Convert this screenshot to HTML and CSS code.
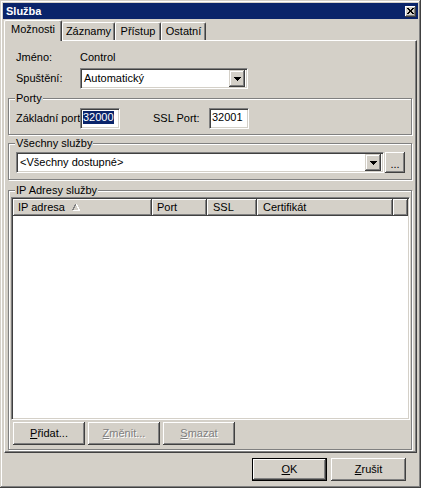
FILE: index.html
```
<!DOCTYPE html>
<html lang="cs">
<head>
<meta charset="utf-8">
<title>Služba</title>
<link rel="stylesheet" href="styles.css">
</head>
<body>
<div class="window">
  <div class="titlebar">
    <span class="title">Služba</span>
    <span class="close-btn">
      <svg width="7" height="6" viewBox="0 0 7 6" shape-rendering="crispEdges"><path d="M0 0h2v1h-2zM5 0h2v1h-2zM1 1h2v1h-2zM4 1h2v1h-2zM2 2h3v2h-3zM1 4h2v1h-2zM4 4h2v1h-2zM0 5h2v1h-2zM5 5h2v1h-2z" fill="#000"/></svg>
    </span>
  </div>
  <div class="client">
    <div class="tabs">
      <div class="tab active">Možnosti</div>
      <div class="tab t-zaznamy">Záznamy</div>
      <div class="tab t-pristup">Přístup</div>
      <div class="tab t-ostatni">Ostatní</div>
    </div>
    <div class="panel">
      <div class="row r-name">
        <span class="lbl">Jméno:</span>
        <span>Control</span>
      </div>
      <div class="row r-start">
        <span class="lbl">Spuštění:</span>
        <div class="combo c-start">
          <span class="combo-text">Automatický</span>
          <span class="drop"><svg width="7" height="4" viewBox="0 0 7 4" shape-rendering="crispEdges"><path d="M0 0h7v1h-7zM1 1h5v1h-5zM2 2h3v1h-3zM3 3h1v1h-1z" fill="#000"/></svg></span>
        </div>
      </div>

      <div class="group g-ports">
        <span class="legend">Porty</span>
        <div class="ports-row">
          <span class="lbl">Základní port</span>
          <div class="edit"><span class="sel">32000</span></div>
          <span class="lbl ssl">SSL Port:</span>
          <div class="edit">32001</div>
        </div>
      </div>

      <div class="group g-all">
        <span class="legend">Všechny služby</span>
        <div class="all-row">
          <div class="combo c-all">
            <span class="combo-text">&lt;Všechny dostupné&gt;</span>
            <span class="drop"><svg width="7" height="4" viewBox="0 0 7 4" shape-rendering="crispEdges"><path d="M0 0h7v1h-7zM1 1h5v1h-5zM2 2h3v1h-3zM3 3h1v1h-1z" fill="#000"/></svg></span>
          </div>
          <div class="btn btn-dots">...</div>
        </div>
      </div>

      <div class="group g-ip">
        <span class="legend">IP Adresy služby</span>
        <div class="listview">
          <div class="lv-header">
            <div class="hcell h-ip">IP adresa<svg class="sort" width="8" height="7" viewBox="0 0 8 7" shape-rendering="crispEdges"><path d="M3.5 0.5 L0.5 6.5" stroke="#808080" fill="none"/><path d="M4.5 0.5 L7.5 6.5 M0.5 6.5 H7.5" stroke="#fff" fill="none"/></svg></div>
            <div class="hcell h-port">Port</div>
            <div class="hcell h-ssl">SSL</div>
            <div class="hcell h-cert">Certifikát</div>
            <div class="hcell h-fill"></div>
          </div>
        </div>
        <div class="ip-buttons">
          <div class="btn btn-act"><u>P</u>řidat...</div>
          <div class="btn btn-act disabled"><u>Z</u>měnit...</div>
          <div class="btn btn-act disabled"><u>S</u>mazat</div>
        </div>
      </div>
    </div>
    <div class="footer">
      <div class="btn btn-main default"><u>O</u>K</div>
      <div class="btn btn-main"><u>Z</u>rušit</div>
    </div>
  </div>
</div>
</body>
</html>
```

FILE: styles.css
```
* { box-sizing: border-box; }
html, body { margin: 0; padding: 0; }
body {
  background: #D4D0C8;
  font: 11px/13px "Liberation Sans", Arial, sans-serif;
  color: #000;
  width: 421px;
  height: 488px;
  overflow: hidden;
}
.window {
  width: 421px;
  height: 488px;
  padding: 3px;
  background: #D4D0C8;
  box-shadow: inset -1px -1px 0 #404040, inset 1px 1px 0 #D4D0C8, inset -2px -2px 0 #808080, inset 2px 2px 0 #fff;
  display: flex;
  flex-direction: column;
}
.titlebar {
  height: 16px;
  background: #0A246A;
  display: flex;
  align-items: center;
  justify-content: space-between;
  padding-left: 3px;
  padding-right: 2px;
  flex: none;
}
.title { color: #fff; font-weight: bold; }
.close-btn {
  width: 11px;
  height: 11px;
  background: #D4D0C8;
  box-shadow: inset -1px -1px 0 #404040, inset 1px 1px 0 #fff, inset -2px -2px 0 #808080;
  display: flex;
  align-items: center;
  justify-content: center;
  padding-bottom: 1px;
}
.close-btn svg { display: block; }
.client {
  flex: 1;
  display: flex;
  flex-direction: column;
  padding: 0 1px;
}
.tabs {
  height: 21px;
  display: flex;
  align-items: flex-end;
  position: relative;
  z-index: 1;
  flex: none;
}
.tab {
  height: 18px;
  border-left: 1px solid #fff;
  border-top: 1px solid #fff;
  border-right: 1px solid #404040;
  box-shadow: inset -1px 0 0 #808080;
  border-radius: 2px 2px 0 0;
  padding-top: 2px;
  text-align: center;
  background: #D4D0C8;
}
.tab.active { width: 58px; height: 21px; margin-bottom: -1px; }
.t-zaznamy { width: 53px; }
.t-pristup { width: 46px; }
.t-ostatni { width: 45px; }
.panel {
  height: 413px;
  flex: none;
  border-left: 1px solid #fff;
  border-top: 1px solid #fff;
  border-right: 1px solid #404040;
  border-bottom: 1px solid #404040;
  box-shadow: inset -1px -1px 0 #808080;
  padding: 0 3px;
  display: flex;
  flex-direction: column;
}
.row { display: flex; align-items: center; margin-left: 8px; }
.lbl { width: 64px; flex: none; white-space: nowrap; }
.r-name { margin-top: 10px; height: 13px; }
.r-start { margin-top: 4px; height: 21px; }

.combo, .edit {
  height: 21px;
  background: #fff;
  border: 1px solid;
  border-color: #808080 #fff #fff #808080;
  box-shadow: inset 1px 1px 0 #404040, inset -1px -1px 0 #D4D0C8;
}
.combo { display: flex; align-items: center; padding: 2px 2px 2px 3px; }
.combo-text { flex: 1; }
.c-start { width: 168px; }
.drop {
  width: 16px;
  height: 17px;
  flex: none;
  background: #D4D0C8;
  box-shadow: inset -1px -1px 0 #404040, inset 1px 1px 0 #D4D0C8, inset -2px -2px 0 #808080, inset 2px 2px 0 #fff;
  display: flex;
  align-items: center;
  justify-content: center;
}
.drop svg { display: block; }

.group {
  position: relative;
  width: 404px;
  border: 1px solid #808080;
  box-shadow: 1px 1px 0 #fff, inset 1px 1px 0 #fff;
  flex: none;
}
.legend {
  position: absolute;
  top: -7px;
  left: 6px;
  padding: 0 1px;
  background: #D4D0C8;
}
.g-ports { margin-top: 9px; padding: 9px 0 5px 7px; }
.ports-row { display: flex; align-items: center; height: 21px; }
.edit { width: 40px; padding: 2px 0 0 2px; position: relative; }
.sel { background: #0A246A; color: #fff; display: inline-block; }
.ssl { margin-left: 33px; width: 56px; }

.g-all { margin-top: 8px; padding: 8px 0 6px 7px; }
.all-row { display: flex; }
.c-all { width: 368px; margin-right: 1px; }
.btn {
  background: #D4D0C8;
  box-shadow: inset -1px -1px 0 #404040, inset 1px 1px 0 #fff, inset -2px -2px 0 #808080;
  display: flex;
  align-items: center;
  justify-content: center;
  flex: none;
}
.btn-dots { width: 20px; height: 21px; padding-top: 3px; }

.g-ip { margin-top: 10px; padding: 6px 0 4px 2px; }
.listview {
  width: 399px;
  height: 223px;
  background: #fff;
  border: 1px solid;
  border-color: #808080 #fff #fff #808080;
  box-shadow: inset 1px 1px 0 #404040, inset -1px -1px 0 #D4D0C8;
  padding: 1px;
}
.lv-header { display: flex; height: 17px; }
.hcell {
  height: 17px;
  background: #D4D0C8;
  box-shadow: inset -1px -1px 0 #404040, inset 1px 1px 0 #fff, inset -2px -2px 0 #808080;
  padding: 2px 0 0 5px;
  display: flex;
  align-items: flex-start;
  flex: none;
}
.h-ip { width: 139px; }
.h-port { width: 55px; }
.h-ssl { width: 50px; padding-left: 6px; }
.h-cert { width: 136px; padding-left: 6px; }
.h-fill { flex: 1; }
.sort { margin: 3px 0 0 7px; display: block; }
.ip-buttons { display: flex; gap: 3px; margin: 2px 0 0 2px; }
.btn-act { width: 72px; height: 23px; }
.disabled { color: #808080; text-shadow: 1px 1px 0 #fff; }

.footer {
  flex: 1;
  display: flex;
  justify-content: flex-end;
  align-items: flex-start;
  gap: 4px;
  padding: 5px 11px 0 0;
}
.btn-main { width: 75px; height: 23px; }
.default {
  border: 1px solid #000;
  box-shadow: inset -1px -1px 0 #404040, inset 1px 1px 0 #fff, inset -2px -2px 0 #808080;
}
u { text-decoration: underline; text-underline-offset: 1px; }
```
